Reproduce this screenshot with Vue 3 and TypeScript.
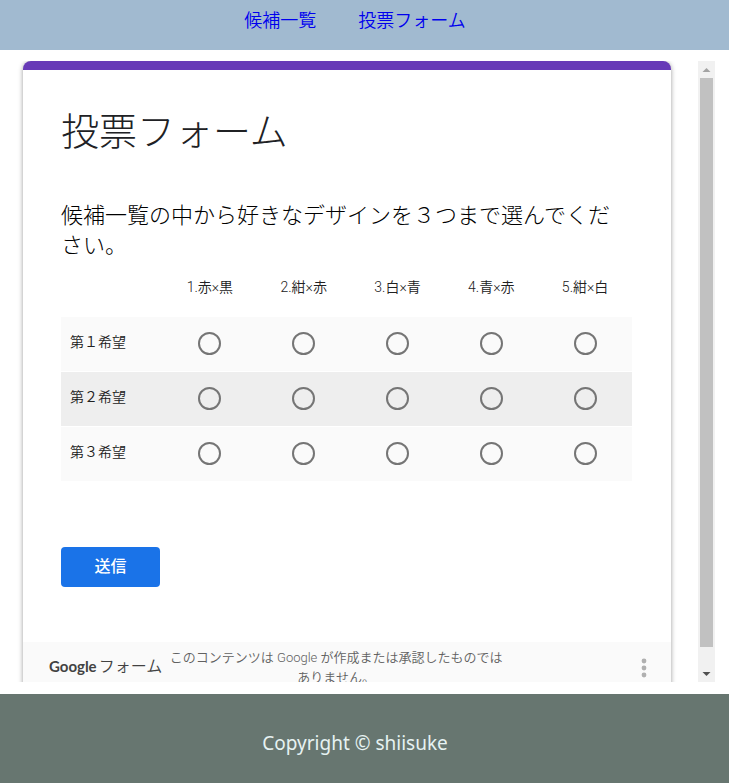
<script setup lang="ts">
import { reactive } from 'vue'

interface Choice {
  id: string
  label: string
}

const designs: Choice[] = [
  { id: 'd1', label: '1.赤×黒' },
  { id: 'd2', label: '2.紺×赤' },
  { id: 'd3', label: '3.白×青' },
  { id: 'd4', label: '4.青×赤' },
  { id: 'd5', label: '5.紺×白' },
]

// The digits in the rank labels and the question are full-width.
const ranks: Choice[] = [
  { id: 'first', label: '第\uFF11希望' },
  { id: 'second', label: '第\uFF12希望' },
  { id: 'third', label: '第\uFF13希望' },
]

const question = '候補一覧の中から好きなデザインを\uFF13つまで選んでください。'

const votes = reactive<Record<string, string>>({ first: '', second: '', third: '' })
</script>

<template>
  <div class="page">
    <header class="site-header">
      <nav class="nav">
        <a href="#list">候補一覧</a>
        <a href="#form">投票フォーム</a>
      </nav>
    </header>

    <main class="frame">
      <div class="viewport">
        <form class="card" @submit.prevent>
          <div class="card-body">
            <h1 class="title">投票フォーム</h1>
            <h2 id="question" class="question">{{ question }}</h2>
            <table class="grid" aria-labelledby="question">
              <thead>
                <tr>
                  <td class="corner"></td>
                  <th v-for="d in designs" :id="d.id" :key="d.id" scope="col">{{ d.label }}</th>
                </tr>
              </thead>
              <tbody>
                <tr v-for="r in ranks" :key="r.id">
                  <th :id="r.id" scope="row">{{ r.label }}</th>
                  <td v-for="d in designs" :key="d.id">
                    <input
                      v-model="votes[r.id]"
                      class="radio"
                      type="radio"
                      :name="r.id"
                      :value="d.id"
                      :aria-labelledby="`${r.id} ${d.id}`"
                    />
                  </td>
                </tr>
              </tbody>
            </table>
            <button class="submit" type="submit">送信</button>
          </div>
          <div class="card-footer">
            <a class="brand" href="#forms"><span class="brand-name">Google</span><span>フォーム</span></a>
            <p class="notice">このコンテンツは Google が作成または承認したものではありません。</p>
            <button class="more" type="button" aria-haspopup="menu">
              <svg viewBox="0 0 6 20" width="6" height="20" aria-hidden="true">
                <circle cx="3" cy="3" r="2.4" />
                <circle cx="3" cy="10" r="2.4" />
                <circle cx="3" cy="17" r="2.4" />
              </svg>
            </button>
          </div>
        </form>
      </div>
      <div class="scrollbar" aria-hidden="true">
        <svg class="up" viewBox="0 0 17 17" width="17" height="17"><path d="M4.500 11h8L8.500 7z" /></svg>
        <div class="track"><div class="thumb"></div></div>
        <svg class="down" viewBox="0 0 17 17" width="17" height="17"><path d="M4.500 7h8L8.500 11z" /></svg>
      </div>
    </main>

    <footer class="site-footer">Copyright © shiisuke</footer>
  </div>
</template>

<style>
body {
  margin: 0;
  background: #fff;
}
</style>

<style scoped>
.page {
  display: flex;
  flex-direction: column;
  height: 100vh;
  font-family: "Noto Sans", "Noto Sans CJK JP", sans-serif;
  font-size: 18px;
  font-weight: 350;
}

.site-header {
  box-sizing: border-box;
  flex: none;
  height: 50px;
  padding: 7px 19px 0 0;
  background: #a1bad0;
}

.nav {
  display: flex;
  justify-content: center;
  gap: 42px;
  line-height: 26px;
}

.nav a {
  color: #0000ee;
  text-decoration: none;
}

.frame {
  display: flex;
  flex: 1;
  min-height: 0;
  margin: 11px 14px 12px 0;
  font-family: Roboto, "Noto Sans CJK JP", sans-serif;
}

.viewport {
  flex: 1;
  padding: 0 27px 0 23px;
  overflow: hidden auto;
  scrollbar-width: none;
}

.card {
  border-top: 9px solid #673ab7;
  border-radius: 8px 8px 0 0;
  background: #fff;
  box-shadow: 0 1px 5px rgba(0, 0, 0, 0.4);
}

.card-body {
  padding: 36px 39px 55px 38px;
}

.title {
  margin: 0 0 43px;
  color: #202124;
  font-size: 38px;
  font-weight: 300;
  line-height: 52px;
}

.question {
  margin: 0;
  padding-right: 8px;
  color: #000;
  font-size: 22px;
  font-weight: 300;
  line-height: 30px;
}

.grid {
  width: 100%;
  border-collapse: separate;
  border-spacing: 0;
  table-layout: fixed;
  color: #212121;
  font-size: 14px;
}

.grid th {
  padding: 0 0 4px;
  font-weight: 350;
  line-height: 20px;
}

.grid thead th {
  box-sizing: border-box;
  height: 56px;
}

.corner {
  width: 102px;
}

.grid tbody tr {
  background: #fafafa;
}

.grid tbody tr:nth-child(even) {
  background: #eee;
}

.grid tbody th,
.grid tbody td {
  box-sizing: border-box;
  height: 55px;
  border-bottom: 1px solid #fff;
}

.grid tbody th {
  padding-left: 9px;
  text-align: left;
}

.grid td {
  padding: 0 0 1px;
  text-align: center;
}

.radio {
  display: block;
  box-sizing: border-box;
  width: 23px;
  height: 23px;
  margin: 0 auto;
  border: 2px solid #757575;
  border-radius: 50%;
  appearance: none;
}

.radio:checked {
  border-color: #673ab7;
  background: radial-gradient(#673ab7 45%, transparent 50%);
}

.submit {
  display: block;
  min-width: 99px;
  height: 40px;
  margin-top: 65px;
  padding: 0 33px 4px;
  border: 0;
  border-radius: 4px;
  background: #1a73e8;
  color: #fff;
  font-family: inherit;
  font-size: 16px;
  font-weight: 500;
}

.card-footer {
  display: flex;
  align-items: center;
  padding: 6px 24px 6px 26px;
  background: #fafafa;
  color: #616161;
}

.brand {
  display: flex;
  flex: none;
  align-items: baseline;
  gap: 2px;
  padding-bottom: 3px;
  color: #424242;
  font-size: 16px;
  line-height: 24px;
  text-decoration: none;
}

.brand-name {
  font-family: Lato, sans-serif;
  font-size: 15px;
  font-weight: 700;
}

.notice {
  width: 340px;
  margin: 0 4px;
  font-size: 13px;
  line-height: 20px;
  text-align: center;
}

.more {
  display: flex;
  margin-left: auto;
  padding: 0;
  border: 0;
  background: none;
  fill: #b0b0b0;
}

.scrollbar {
  display: flex;
  flex: none;
  flex-direction: column;
  width: 17px;
  background: #f1f1f1;
}

.scrollbar svg {
  display: block;
  flex: none;
}

.up {
  fill: #a3a3a3;
}

.down {
  fill: #505050;
}

.track {
  flex: 1;
  padding: 0 2px;
}

.thumb {
  height: 97%;
  background: #c1c1c1;
}

.site-footer {
  box-sizing: border-box;
  flex: none;
  height: 89px;
  padding: 36px 19px 0 0;
  background: #677670;
  color: #e6f2f2;
  font-size: 19px;
  font-weight: 400;
  line-height: 26px;
  text-align: center;
}
</style>
